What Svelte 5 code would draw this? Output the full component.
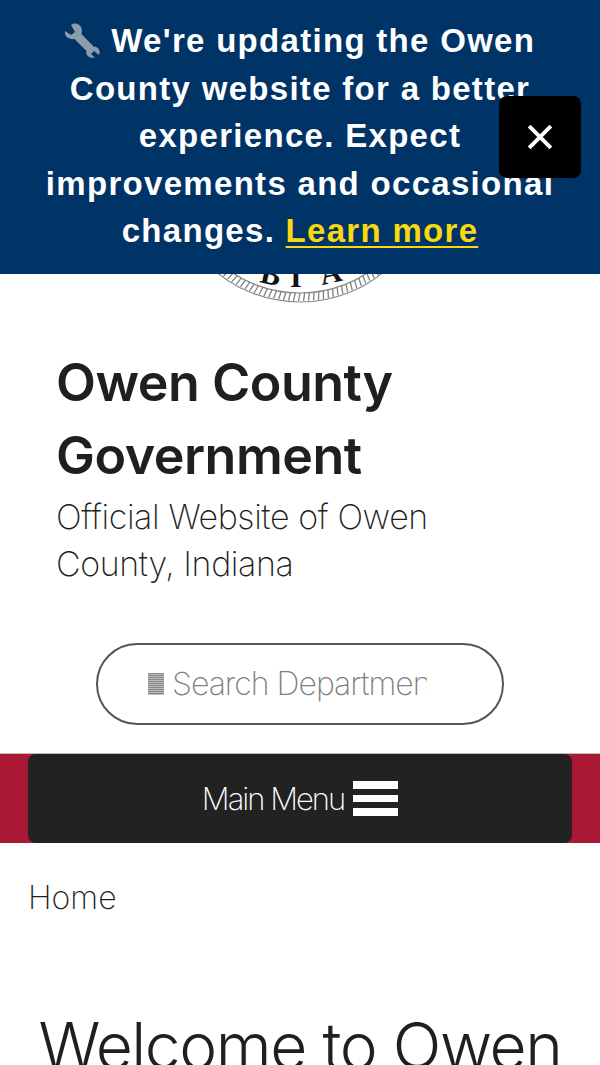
<script>
  const ticks = Array.from({ length: 164 }, (_, i) => i * (360 / 164));
</script>

<div class="page">
  <aside class="banner">
    <p class="notice">
      <svg class="wrench" viewBox="0 0 36 36" aria-hidden="true">
        <path d="M1 9 L7 13 L11 10 L7 3 C11 0 17 2 18 8 L17.5 12 L30 25 C33 24 37 28 35 33 L30 29 L27 32 L31 35.5 C26 37 21 33 22.5 29 L10.5 17 C5 18 0 14 1 9 Z" />
      </svg>
      We're updating the Owen County website for a better experience. Expect improvements and occasional changes. <a href="#more">Learn more</a>
    </p>
    <button class="close" aria-label="Close">
      <svg viewBox="0 0 24 24"><path d="M2 2 L22 22 M22 2 L2 22" /></svg>
    </button>
  </aside>

  <header class="head">
    <svg class="seal" viewBox="0 0 266 266" aria-hidden="true">
      <circle cx="133" cy="133" r="132" class="ring" />
      <circle cx="133" cy="133" r="123" class="ring" />
      {#each ticks as t}
        <line x1="134.5" y1="2" x2="133" y2="10" class="tick" transform="rotate({t} 133 133)" />
      {/each}
      <text x="92" y="245" transform="rotate(12 92 245)" class="letter">B</text>
      <text x="123" y="250" class="letter">I</text>
      <text x="155" y="248" transform="rotate(-12 155 248)" class="letter">A</text>
    </svg>
    <div class="brand">
      <h1>Owen County Government</h1>
      <p>Official Website of Owen County, Indiana</p>
    </div>
    <div class="search">
      <span class="glyph"></span>
      <input placeholder="Search Departments" aria-label="Search Departments" />
    </div>
  </header>

  <nav class="navbar">
    <button class="menu">
      <span>Main Menu</span>
      <span class="bars"><i></i><i></i><i></i></span>
    </button>
  </nav>

  <main>
    <div class="crumb">Home</div>
    <h2>Welcome to Owen County</h2>
  </main>
</div>

<style>
  :global(body) { margin: 0; background: #fff; }
  .page {
    position: relative;
    height: 1065px;
    overflow: hidden;
    font-family: Inter, "Noto Sans", sans-serif;
    color: #1f1f1f;
  }
  .banner {
    position: absolute;
    top: 0; left: 0; right: 0;
    height: 274px;
    background: #003366;
    box-sizing: border-box;
    padding: 17px 40px 0;
    z-index: 2;
  }
  .notice {
    margin: 0;
    font: 700 33px/47.5px "Liberation Sans", Arial, sans-serif;
    letter-spacing: 1.3px;
    color: #fff;
    text-align: center;
  }
  .wrench { width: 36px; height: 36px; margin: 0 1px 0 -1px; fill: #8d9cab; vertical-align: -6px; }
  .notice a { color: #f6d90f; text-decoration: underline; text-decoration-thickness: 2px; text-underline-offset: 4px; }
  .close {
    position: absolute;
    top: 96px; right: 19px;
    width: 82px; height: 82px;
    background: #000;
    border: 0;
    border-radius: 8px;
    padding: 0;
    display: flex;
    align-items: center;
    justify-content: center;
  }
  .close svg { width: 26px; height: 26px; }
  .close path { stroke: #fff; stroke-width: 3.6; fill: none; }
  .head { display: flex; flex-direction: column; align-items: stretch; padding-top: 37px; }
  .seal { width: 266px; height: 266px; align-self: center; }
  .ring { fill: #fff; stroke: #888; stroke-width: 1.2; }
  .tick { stroke: #808080; stroke-width: 1.3; }
  .letter { font: 700 30px "Liberation Serif", serif; fill: #111; }
  .brand { padding: 43px 80px 0 56px; }
  h1 { margin: 0; font-size: 52px; line-height: 73px; font-weight: 600; letter-spacing: -0.5px; color: #1f1f1f; }
  .brand p { margin: 1px 0 0; font-size: 34px; line-height: 47px; font-weight: 250; letter-spacing: -0.4px; color: #1f1f1f; }
  .search {
    margin: 56px auto 28px;
    width: 408px; height: 82px;
    box-sizing: border-box;
    border: 2px solid #555;
    border-radius: 41px;
    display: flex;
    align-items: center;
    padding: 0 75px 0 50px;
    gap: 8px;
  }
  .glyph {
    flex: none;
    width: 16px; height: 22px;
    background: repeating-linear-gradient(#888 0 1px, #bbb 1px 2px);
  }
  input {
    flex: 1;
    min-width: 0;
    border: 0;
    outline: 0;
    padding: 0 0 2px;
    font: 250 32px Inter, sans-serif;
    letter-spacing: -1px;
    background: transparent;
  }
  input::placeholder { color: #808080; opacity: 1; }
  .navbar { background: #a91834; padding: 0 28px; border-top: 1px solid #bbb; }
  .menu {
    width: 100%; height: 89px;
    background: #222;
    border: 0;
    border-radius: 8px;
    color: #fff;
    font: 200 31px Inter, sans-serif;
    letter-spacing: -2px;
    display: flex;
    align-items: center;
    justify-content: center;
    gap: 9px;
    padding: 0;
  }
  .bars { display: flex; flex-direction: column; gap: 6px; }
  .bars i { display: block; width: 45px; height: 7.5px; background: #fff; }
  main { padding: 33px 28px 0; }
  .crumb { font-size: 32px; line-height: 44px; font-weight: 250; color: #1f1f1f; }
  h2 { margin: 86px 0 0; font-size: 64px; line-height: 80px; font-weight: 280; letter-spacing: -1.4px; text-align: center; color: #1f1f1f; }
</style>
